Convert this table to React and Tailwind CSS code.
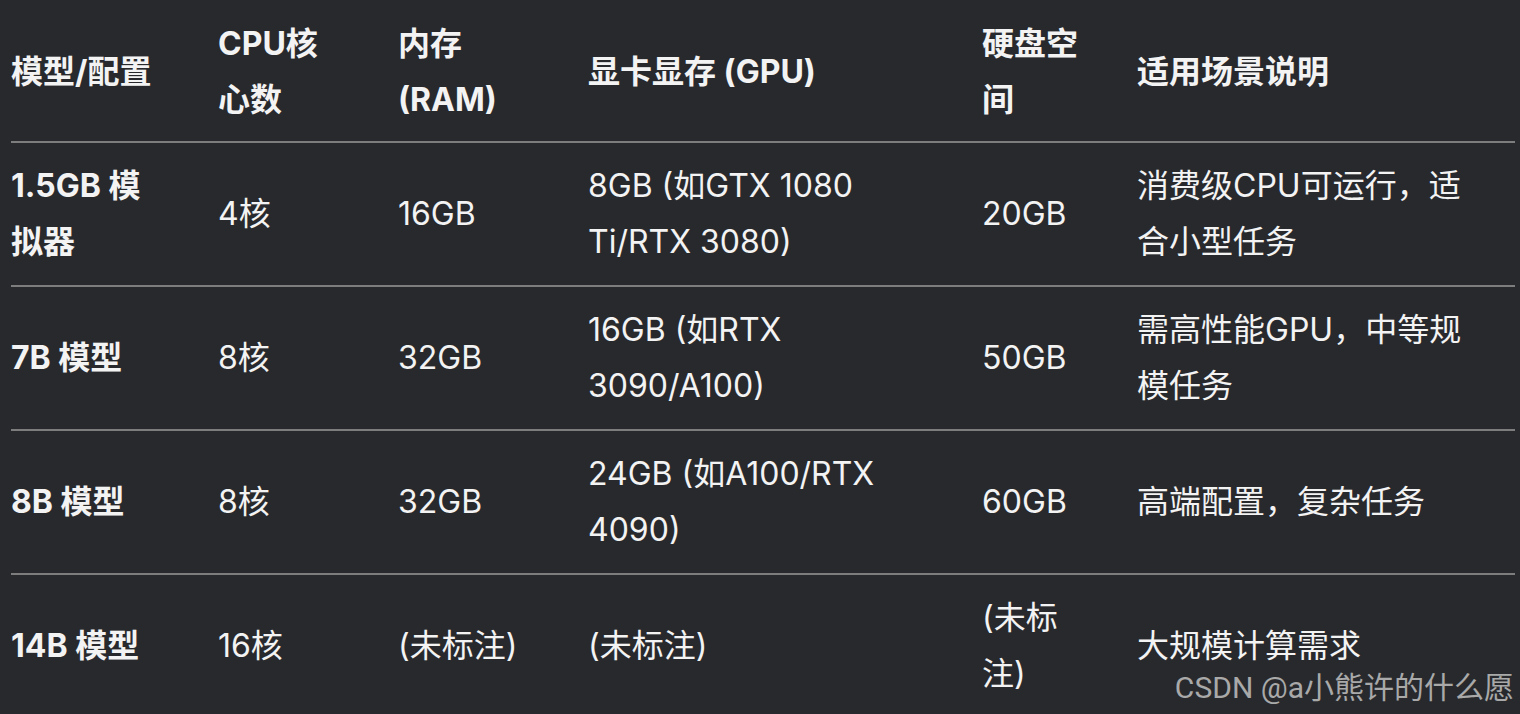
import React from "react";

const rows = [
  { cells: [["1.5GB 模", "拟器"], ["4核"], ["16GB"], ["8GB (如GTX 1080", "Ti/RTX 3080)"], ["20GB"], ["消费级CPU可运行，适", "合小型任务"]] },
  { cells: [["7B 模型"], ["8核"], ["32GB"], ["16GB (如RTX", "3090/A100)"], ["50GB"], ["需高性能GPU，中等规", "模任务"]] },
  { cells: [["8B 模型"], ["8核"], ["32GB"], ["24GB (如A100/RTX", "4090)"], ["60GB"], ["高端配置，复杂任务"]] },
  { cells: [["14B 模型"], ["16核"], ["(未标注)"], ["(未标注)"], ["(未标", "注)"], ["大规模计算需求"]] },
];

const header = [["模型/配置"], ["CPU核", "心数"], ["内存", "(RAM)"], ["显卡显存 (GPU)"], ["硬盘空", "间"], ["适用场景说明"]];

function Cell({ lines, bold }) {
  return (
    <div className={"flex flex-col justify-center whitespace-nowrap " + (bold ? "font-bold" : "")}>
      {lines.map((l, i) => (
        <span key={i} className="block leading-[56px]">{l}</span>
      ))}
    </div>
  );
}

export default function App() {
  return (
    <div
      className="relative w-[1520px] h-[714px] overflow-hidden bg-[#28292d] text-[#f3f3f3] text-[32px]"
      style={{ fontFamily: 'Inter, "Noto Sans CJK SC", sans-serif' }}
    >
      <div className="ml-[11px] w-[1504px]">
        <div className="grid grid-cols-[207px_180px_190px_394px_155px_1fr] pt-[16px] pb-[13px] border-b-2 border-[#7d7d7d]">
          {header.map((h, i) => (
            <Cell key={i} lines={h} bold />
          ))}
        </div>
        {rows.map((r, ri) => (
          <div
            key={ri}
            className="grid grid-cols-[207px_180px_190px_394px_155px_1fr] h-[144px] py-[15px] border-b-2 border-[#7d7d7d]"
          >
            {r.cells.map((c, ci) => (
              <Cell key={ci} lines={c} bold={ci === 0} />
            ))}
          </div>
        ))}
      </div>
      <div
        className="absolute right-[6px] bottom-[10px] text-[30px] leading-[32px] text-[#a9a9a9]"
        style={{ fontFamily: 'Roboto, "Noto Sans CJK SC", sans-serif' }}
      >
        CSDN @a小熊许的什么愿
      </div>
    </div>
  );
}
